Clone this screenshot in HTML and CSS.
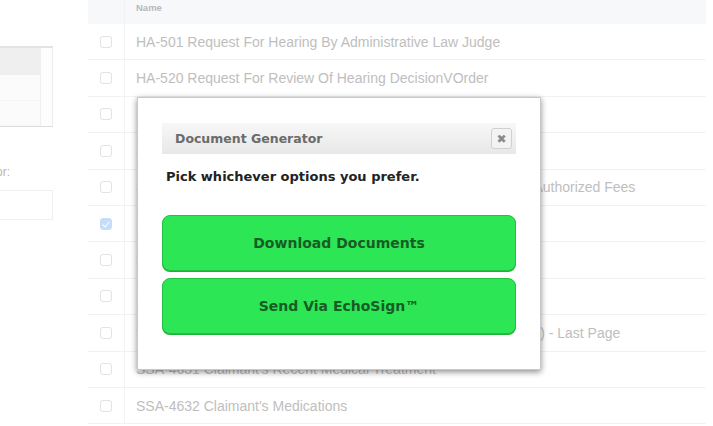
FILE: index.html
```html
<!DOCTYPE html>
<html>
<head>
<meta charset="utf-8">
<link rel="stylesheet" href="styles.css">
</head>
<body>
<div class="page">
  <aside class="sidebar">
    <div class="sidebar-inner">
      <div class="listbox">
        <div class="list-rows">
          <div class="list-row active"></div>
          <div class="list-row"></div>
          <div class="list-row"></div>
        </div>
        <div class="list-track"></div>
      </div>
      <div class="field-label"><span>Choose a Claimant Advisor:</span></div>
      <div class="field-input"></div>
    </div>
  </aside>
  <main class="table">
    <div class="thead">
      <div class="cell-check"></div>
      <div class="cell-name">Name</div>
    </div>
    <div class="row"><div class="cell-check"><span class="cb"></span></div><div class="cell-name">HA-501 Request For Hearing By Administrative Law Judge</div></div>
    <div class="row"><div class="cell-check"><span class="cb"></span></div><div class="cell-name">HA-520 Request For Review Of Hearing DecisionVOrder</div></div>
    <div class="row"><div class="cell-check"><span class="cb"></span></div><div class="cell-name">SSA-1696 Appointment Of Representative</div></div>
    <div class="row"><div class="cell-check"><span class="cb"></span></div><div class="cell-name">SSA-1699 Registration For Appointed Representatives</div></div>
    <div class="row"><div class="cell-check"><span class="cb"></span></div><div class="cell-name">SSA-1560 Petition For Authorization To Charge And Collect Any Authorized Fees</div></div>
    <div class="row"><div class="cell-check"><span class="cb checked"></span></div><div class="cell-name">SSA-827 Authorization To Disclose Information</div></div>
    <div class="row"><div class="cell-check"><span class="cb"></span></div><div class="cell-name">SSA-3441 Disability Report - Appeal</div></div>
    <div class="row"><div class="cell-check"><span class="cb"></span></div><div class="cell-name">SSA-3368 Disability Report - Adult</div></div>
    <div class="row"><div class="cell-check"><span class="cb"></span></div><div class="cell-name">SSA-827 Authorization To Disclose Information To SSA (Financial) - Last Page</div></div>
    <div class="row"><div class="cell-check"><span class="cb"></span></div><div class="cell-name">SSA-4631 Claimant's Recent Medical Treatment</div></div>
    <div class="row"><div class="cell-check"><span class="cb"></span></div><div class="cell-name">SSA-4632 Claimant's Medications</div></div>
  </main>
</div>

<div class="modal">
  <div class="modal-title">
    <span>Document Generator</span>
    <span class="modal-close">&#10006;</span>
  </div>
  <p class="modal-text">Pick whichever options you prefer.</p>
  <div class="modal-buttons">
    <button class="btn-green">Download Documents</button>
    <button class="btn-green">Send Via EchoSign&trade;</button>
  </div>
</div>
</body>
</html>
```

FILE: styles.css
```css
html, body {
  margin: 0;
  padding: 0;
  background: #ffffff;
  overflow: hidden;
}
body {
  width: 713px;
  height: 426px;
  font-family: "Liberation Sans", Arial, sans-serif;
  position: relative;
}
.page {
  display: flex;
  height: 426px;
  overflow: hidden;
}
.sidebar {
  width: 88px;
  flex: none;
  overflow: hidden;
}
.sidebar-inner {
  margin-left: -200px;
  width: 253px;
  padding-top: 46px;
}
.listbox {
  display: flex;
  height: 81px;
  border-top: 2px solid #e3e3e3;
  border-bottom: 1px solid #dcdcdc;
  border-right: 1px solid #ececec;
  box-sizing: border-box;
}
.list-rows {
  flex: 1;
  display: flex;
  flex-direction: column;
}
.list-row {
  height: 26px;
  background: #fbfbfb;
  border-bottom: 1px solid #f6f6f6;
}
.list-row.active {
  height: 29px;
  background: #efefef;
  border-bottom: none;
}
.list-track {
  width: 11px;
  border-left: 1px solid #f0f0f0;
  background: #fdfdfd;
}
.field-label {
  margin-top: 37px;
  display: flex;
  justify-content: flex-end;
  padding-right: 43px;
  white-space: nowrap;
  font-size: 12px;
  color: #b8b8b8;
  line-height: 16px;
}
.field-label span {
  flex: none;
}
.field-input {
  margin-top: 10px;
  height: 30px;
  border: 1px solid #efefef;
  box-sizing: border-box;
}

.table {
  width: 618px;
  flex: none;
}
.thead {
  display: flex;
  height: 24px;
  background: #f7f8fa;
}
.thead .cell-name {
  font-size: 9.5px;
  font-weight: bold;
  color: #b5b8bd;
  line-height: 16px;
  align-self: flex-start;
}
.row {
  display: flex;
  height: 36.4px;
  border-bottom: 1px solid #f2f2f2;
  box-sizing: border-box;
  align-items: center;
}
.cell-check {
  width: 36px;
  align-self: stretch;
  border-right: 1px solid #f4f4f4;
  display: flex;
  align-items: center;
  justify-content: center;
  flex: none;
}
.thead .cell-check {
  border-right-color: #f0f1f3;
}
.cell-name {
  padding-left: 11px;
  font-size: 14px;
  color: #bebebe;
  white-space: nowrap;
}
.cb {
  width: 10px;
  height: 10px;
  border: 1px solid #e2e2e2;
  border-radius: 3px;
  background: #fff;
  position: relative;
}
.cb.checked {
  background: #c6dcfb;
  border-color: #c6dcfb;
}
.cb.checked::after {
  content: "";
  position: absolute;
  left: 3px;
  top: 1px;
  width: 3px;
  height: 6px;
  border-right: 1.5px solid #fff;
  border-bottom: 1.5px solid #fff;
  transform: rotate(40deg);
}

.modal {
  position: absolute;
  left: 137px;
  top: 97px;
  width: 404px;
  height: 273px;
  box-sizing: border-box;
  background: #fff;
  border: 1px solid #c8c8c8;
  box-shadow: 0 2px 6px rgba(0, 0, 0, 0.45);
  padding: 25px 24px 0 24px;
  font-family: "DejaVu Sans", Verdana, sans-serif;
}
.modal-title {
  height: 31px;
  display: flex;
  align-items: center;
  justify-content: space-between;
  padding: 0 4px 0 13px;
  background: linear-gradient(#f7f7f7, #e8e8e8);
  font-size: 12.5px;
  font-weight: bold;
  color: #6b6b6b;
}
.modal-close {
  width: 19px;
  height: 19px;
  border: 1px solid #d0d0d0;
  border-radius: 3px;
  background: #f3f3f3;
  color: #8a8a8a;
  font-size: 12px;
  display: flex;
  align-items: center;
  justify-content: center;
}
.modal-text {
  margin: 0;
  padding: 15px 0 0 4px;
  height: 29px;
  font-size: 13px;
  font-weight: bold;
  color: #222;
  line-height: 16px;
}
.modal-buttons {
  margin-top: 17px;
  display: flex;
  flex-direction: column;
  gap: 7px;
}
.btn-green {
  height: 56px;
  border: 1px solid #22c13f;
  border-radius: 8px;
  background: #2de655;
  box-shadow: 0 1px 0 #20b03a;
  font-family: "DejaVu Sans", Verdana, sans-serif;
  font-size: 14px;
  font-weight: bold;
  color: #175c25;
  padding: 0;
}
```
